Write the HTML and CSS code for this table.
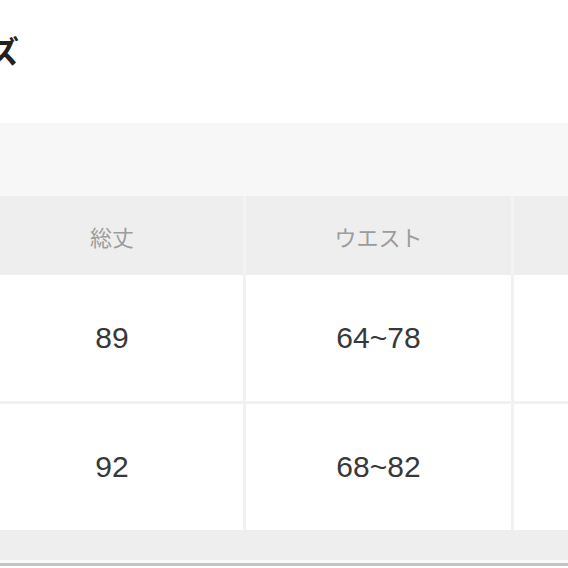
FILE: index.html
```html
<!DOCTYPE html>
<html lang="ja">
<head>
<meta charset="utf-8">
<link rel="stylesheet" href="styles.css">
</head>
<body>
<div class="page">
  <h1 class="title">サイズ</h1>
  <div class="caption"></div>
  <div class="table">
    <div class="row head">
      <div class="cell">着丈</div>
      <div class="cell">総丈</div>
      <div class="cell">ウエスト</div>
      <div class="cell">ヒップ</div>
    </div>
    <div class="row body">
      <div class="cell">S</div>
      <div class="cell">89</div>
      <div class="cell">64~78</div>
      <div class="cell">90</div>
    </div>
    <div class="row body">
      <div class="cell">M</div>
      <div class="cell">92</div>
      <div class="cell">68~82</div>
      <div class="cell">94</div>
    </div>
  </div>
  <div class="footer"></div>
</div>
</body>
</html>
```
FILE: styles.css
```css
html, body {
  margin: 0;
  padding: 0;
  background: #ffffff;
  overflow: hidden;
  width: 568px;
  height: 568px;
}
.page {
  margin-left: -287px;
  width: 1200px;
  font-family: "Liberation Sans", "Noto Sans CJK JP", sans-serif;
}
.title {
  margin: 0;
  height: 123px;
  box-sizing: border-box;
  padding: 30px 0 0 214px;
  font-family: "Noto Sans CJK JP", sans-serif;
  font-size: 31px;
  font-weight: 700;
  line-height: 40px;
  color: #222;
}
.caption {
  height: 73px;
  background: #f7f7f7;
}
.table {
  display: flex;
  flex-direction: column;
  gap: 3px;
  background: #f1f1f1;
}
.row {
  display: grid;
  grid-template-columns: 265px 262px 265px 265px;
  column-gap: 3px;
}
.head {
  background: #f3f3f3;
  margin-bottom: -3px;
}
.head .cell {
  height: 79px;
  background: #eeeeee;
  color: #9c9c9c;
  font-family: "Noto Sans CJK JP", sans-serif;
  font-size: 22px;
  display: flex;
  align-items: center;
  justify-content: center;
}
.body .cell {
  height: 126px;
  background: #ffffff;
  color: #383838;
  font-size: 30px;
  display: flex;
  align-items: center;
  justify-content: center;
}
.footer {
  height: 30px;
  background: #eeeeee;
  border-bottom: 3px solid #f8f8f8;
  box-shadow: 0 3px 0 #c4c4c4;
}
```
